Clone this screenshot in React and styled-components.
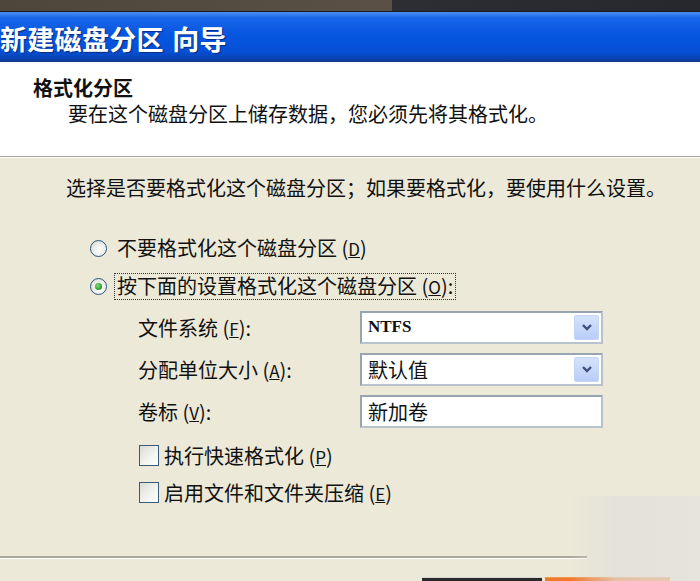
import styled, { createGlobalStyle } from "styled-components";

const Global = createGlobalStyle`
  html, body {
    margin: 0;
    padding: 0;
    background: #ece9d8;
  }
  * {
    box-sizing: border-box;
  }
`;

const Window = styled.div`
  position: relative;
  width: 700px;
  height: 581px;
  overflow: hidden;
  background: #ece9d8;
  font-family: "Noto Sans CJK SC", "Noto Sans", sans-serif;
  color: #111;
  display: flex;
  flex-direction: column;
`;

const TopStrip = styled.div`
  height: 12px;
  flex-shrink: 0;
  background: linear-gradient(to right, #4e463a 0, #5a5046 56%, #2c2e34 56%, #26282d 100%);
  border-bottom: 1px solid #1a1a1a;
`;

const TitleBar = styled.div`
  height: 50px;
  flex-shrink: 0;
  display: flex;
  align-items: center;
  background: linear-gradient(
    to bottom,
    #4a8ef5 0%,
    #1a66ea 12%,
    #0756e0 45%,
    #0550d6 80%,
    #0a3faa 96%,
    #1f3a78 100%
  );
`;

const Title = styled.h1`
  margin: 2px 0 0 0;
  font-size: 27px;
  font-weight: 700;
  letter-spacing: 0.3px;
  color: #fff;
  text-shadow: 1px 1px 1px #0a2a80;
  word-spacing: 2px;
`;

const Header = styled.div`
  height: 95px;
  flex-shrink: 0;
  background: #fff;
  padding: 14px 0 0 33px;
  border-bottom: 1px solid #aca899;
  box-shadow: 0 1px 0 #fff;
`;

const HeaderTitle = styled.div`
  font-size: 20px;
  font-weight: 700;
  line-height: 24px;
`;

const HeaderText = styled.div`
  margin: 2px 0 0 35px;
  font-size: 20px;
  line-height: 24px;
`;

const Body = styled.div`
  flex: 1;
  display: flex;
  flex-direction: column;
  padding: 19px 0 0 66px;
`;

const Prompt = styled.div`
  font-size: 20px;
  line-height: 24px;
`;

const RadioGroup = styled.div`
  margin: 30px 0 0 24px;
  display: flex;
  flex-direction: column;
  gap: 2px;
`;

const RadioRow = styled.label`
  height: 36px;
  display: flex;
  align-items: center;
  gap: 8px;
  font-size: 20px;
`;

const RadioDot = styled.span`
  width: 17px;
  height: 17px;
  border-radius: 50%;
  border: 1px solid #2a5580;
  background: radial-gradient(circle at 60% 60%, #ffffff 0%, #eeeee8 50%, #d0d0c8 100%);
  display: flex;
  align-items: center;
  justify-content: center;
  flex-shrink: 0;

  &::after {
    content: "";
    width: 7px;
    height: 7px;
    border-radius: 50%;
    background: radial-gradient(circle at 40% 40%, #7fe07f 0%, #2ea42e 60%, #1f7a1f 100%);
    display: ${(p) => (p.$checked ? "block" : "none")};
  }
`;

const RadioText = styled.span`
  line-height: 24px;
  padding: 0 2px;
  outline: ${(p) => (p.$focus ? "1px dotted #333" : "none")};
`;

const Key = styled.span`
  text-decoration: underline;
  font-size: 17px;
`;

const Fields = styled.div`
  margin: 6px 0 0 72px;
  display: flex;
  flex-direction: column;
  gap: 8px;
`;

const FieldRow = styled.div`
  height: 34px;
  display: grid;
  grid-template-columns: 222px 243px;
  align-items: center;
`;

const Label = styled.span`
  font-size: 20px;
`;

const Select = styled.div`
  height: 33px;
  border: 2px solid #8c9aa8;
  border-color: #98a4b0 #b8c2cc #b8c2cc #98a4b0;
  background: #fff;
  display: flex;
  align-items: center;
  justify-content: space-between;
  padding: 2px 2px 2px 6px;
  font-size: 20px;
`;

const Value = styled.span`
  font-family: ${(p) => (p.$latin ? '"Liberation Serif", serif' : "inherit")};
  font-weight: ${(p) => (p.$latin ? 700 : 400)};
  font-size: ${(p) => (p.$latin ? "17px" : "20px")};
`;

const DropButton = styled.span`
  width: 25px;
  height: 25px;
  border-radius: 2px;
  background: linear-gradient(#d6e2fc, #b9cdf8);
  border: 1px solid #c4d4f6;
  display: flex;
  align-items: center;
  justify-content: center;
`;

const Checks = styled.div`
  margin: 12px 0 0 73px;
  display: flex;
  flex-direction: column;
  gap: 7px;
`;

const CheckRow = styled.label`
  height: 30px;
  display: flex;
  align-items: center;
  gap: 5px;
  font-size: 20px;
`;

const CheckBox = styled.span`
  width: 20px;
  height: 21px;
  border: 1px solid #3a5a7a;
  background: linear-gradient(135deg, #dcdcd6 0%, #f4f4f0 60%, #ffffff 100%);
  flex-shrink: 0;
`;

const Divider = styled.div`
  width: 587px;
  height: 3px;
  border-top: 2px solid #aca899;
  border-bottom: 1px solid #fff;
  flex-shrink: 0;
`;

const Footer = styled.div`
  height: 22px;
  flex-shrink: 0;
  display: flex;
  align-items: flex-end;
  padding-left: 422px;
  gap: 3px;
`;

const PeekButton = styled.span`
  width: ${(p) => p.$w}px;
  height: 4px;
  background: ${(p) => p.$bg};
  border-top: 1px solid ${(p) => p.$edge};
`;

const Watermark = styled.div`
  position: absolute;
  right: 0;
  bottom: 0;
  width: 130px;
  height: 85px;
  background: linear-gradient(
    to right,
    rgba(226, 224, 218, 0) 0%,
    rgba(224, 222, 216, 0.7) 35%,
    rgba(228, 227, 222, 0.8) 100%
  );
  pointer-events: none;
`;

function Chevron() {
  return (
    <svg width="12" height="9" viewBox="0 0 12 9">
      <path d="M2 2 L6 6 L10 2" fill="none" stroke="#3d4f7a" strokeWidth="2.4" />
    </svg>
  );
}

export default function App() {
  return (
    <Window>
      <Global />
      <TopStrip />
      <TitleBar>
        <Title>新建磁盘分区 向导</Title>
      </TitleBar>
      <Header>
        <HeaderTitle>格式化分区</HeaderTitle>
        <HeaderText>要在这个磁盘分区上储存数据，您必须先将其格式化。</HeaderText>
      </Header>
      <Body>
        <Prompt>选择是否要格式化这个磁盘分区；如果要格式化，要使用什么设置。</Prompt>
        <RadioGroup>
          <RadioRow>
            <RadioDot />
            <RadioText>
              不要格式化这个磁盘分区 (<Key>D</Key>)
            </RadioText>
          </RadioRow>
          <RadioRow>
            <RadioDot $checked />
            <RadioText $focus>
              按下面的设置格式化这个磁盘分区 (<Key>O</Key>):
            </RadioText>
          </RadioRow>
        </RadioGroup>
        <Fields>
          <FieldRow>
            <Label>
              文件系统 (<Key>F</Key>):
            </Label>
            <Select>
              <Value $latin>NTFS</Value>
              <DropButton>
                <Chevron />
              </DropButton>
            </Select>
          </FieldRow>
          <FieldRow>
            <Label>
              分配单位大小 (<Key>A</Key>):
            </Label>
            <Select>
              <Value>默认值</Value>
              <DropButton>
                <Chevron />
              </DropButton>
            </Select>
          </FieldRow>
          <FieldRow>
            <Label>
              卷标 (<Key>V</Key>):
            </Label>
            <Select>
              <Value>新加卷</Value>
            </Select>
          </FieldRow>
        </Fields>
        <Checks>
          <CheckRow>
            <CheckBox />
            <Label>
              执行快速格式化 (<Key>P</Key>)
            </Label>
          </CheckRow>
          <CheckRow>
            <CheckBox />
            <Label>
              启用文件和文件夹压缩 (<Key>E</Key>)
            </Label>
          </CheckRow>
        </Checks>
      </Body>
      <Divider />
      <Footer>
        <PeekButton $w={120} $bg="#2a2a2a" $edge="#d8d8d8" />
        <PeekButton $w={125} $bg="#f07a2c" $edge="#f49050" />
      </Footer>
      <Watermark />
    </Window>
  );
}
